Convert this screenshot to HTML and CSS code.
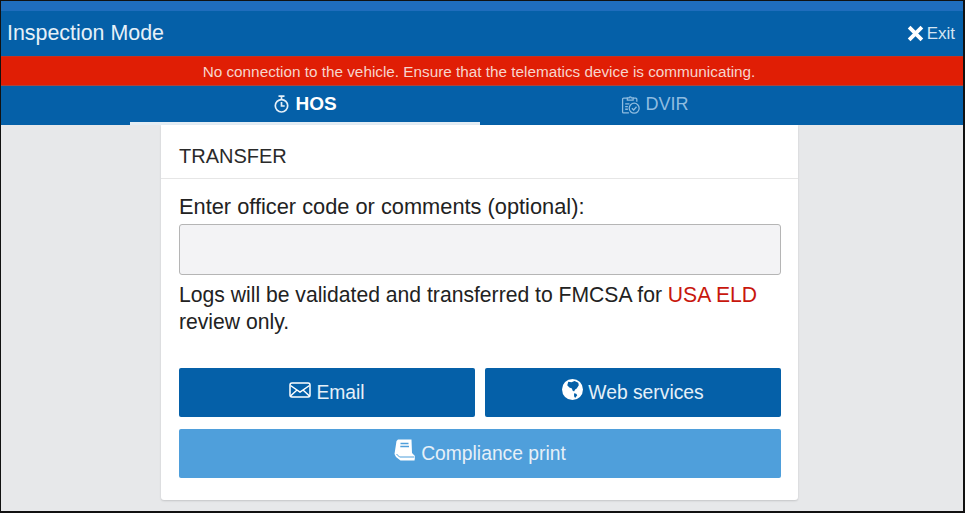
FILE: index.html
```html
<!DOCTYPE html>
<html lang="en">
<head>
    <meta charset="UTF-8">
    <meta name="viewport" content="width=device-width, initial-scale=1.0">
    <title>Inspection Mode</title>
    <link rel="stylesheet" href="styles.css">
</head>
<body>
    <div class="frame">
        <div class="status-strip"></div>
        <header class="topbar">
            <h1>Inspection Mode</h1>
            <a class="exit">
                <svg class="exit-icon" viewBox="0 0 16 16"><path d="M2 2 14 14M14 2 2 14" stroke="#fff" stroke-width="3.6" fill="none"/></svg>
                Exit
            </a>
        </header>
        <div class="alert">No connection to the vehicle. Ensure that the telematics device is communicating.</div>
        <nav class="tabs">
            <div class="tab active">
                <svg class="tab-icon" viewBox="0 0 16 18" fill="none" stroke="#e6f0f8" stroke-width="1.7">
                    <circle cx="8" cy="10.8" r="6.2"/>
                    <path d="M5 1.200h6M8 1.200v3.400M8 7v4h3.200"/>
                </svg>
                HOS
            </div>
            <div class="tab dvir">
                <svg class="tab-icon" viewBox="0 0 18 18" fill="none" stroke="#8fbce0" stroke-width="1.2">
                    <path d="M6 3H2.500a1 1 0 0 0-1 1v12a1 1 0 0 0 1 1h5M11.500 3H14a1 1 0 0 1 1 1v2.500"/>
                    <path d="M6 4.800V2.800h1.700a1 1 0 0 1 2.100 0h1.700v2z"/>
                    <path d="M4 8.500h4M4 11h2.500M4 13.500h2.500"/>
                    <circle cx="12.500" cy="12.500" r="4.700"/>
                    <path d="M10.300 12.500l1.700 1.700 2.700-3.100"/>
                </svg>
                DVIR
            </div>
        </nav>
        <main class="content">
            <section class="card">
                <h2>TRANSFER</h2>
                <div class="card-body">
                    <label for="comments">Enter officer code or comments (optional):</label>
                    <input type="text" id="comments" name="comments">
                    <p class="note">Logs will be validated and transferred to FMCSA for <span class="red">USA ELD</span> review only.</p>
                    <div class="actions">
                        <button class="btn">
                            <svg class="btn-icon" viewBox="0 0 22 16" fill="none" stroke="#fff" stroke-width="1.500">
                                <rect x="1" y="1" width="20" height="14" rx="2"/>
                                <path d="M1.500 3.500 11 10l9.500-6.500M1.500 14l6.500-6M20.500 14l-6.500-6"/>
                            </svg>
                            Email
                        </button>
                        <button class="btn">
                            <svg class="btn-icon globe" viewBox="0 0 20 20">
                                <circle cx="10" cy="10" r="10" fill="#fff"/>
                                <path d="M6 2.500 9 3l3-1 3.500 1.500.5 2.500-2 3-1.500 1-1 2-1.500-1-.5-2-2.500-1-2-2L6 2.500zM11.500 13.500l2 .5 1 1.500-2 2.500-1-1.500z" fill="#0560a8"/>
                            </svg>
                            Web services
                        </button>
                        <button class="btn btn-light wide">
                            <svg class="btn-icon book" viewBox="0 0 22 22">
                                <path d="M4 .5H17.500l.5 13.500 3 3v1.500L20.500 21.500H6.500L2 18 .5 15 2.500 2z" fill="#fff"/>
                                <path d="M6.500 4.500h8M6.300 7.500h8.700" stroke="#4f9fdb" stroke-width="1.500"/>
                                <path d="M2.500 15 5.500 18H20.500" stroke="#4f9fdb" stroke-width="1" fill="none"/>
                            </svg>
                            Compliance print
                        </button>
                    </div>
                </div>
            </section>
        </main>
    </div>
</body>
</html>
```

FILE: styles.css
```css
* {
    box-sizing: border-box;
}

body {
    margin: 0;
    font-family: "Liberation Sans", Arial, sans-serif;
    background-color: #000;
}

.frame {
    width: 965px;
    height: 513px;
    border-style: solid;
    border-color: #111;
    border-width: 1px 2px 2px 1px;
    display: flex;
    flex-direction: column;
    background-color: #e7e8ea;
    overflow: hidden;
}

.status-strip {
    height: 10px;
    background-color: #1f6dbd;
}

.topbar {
    height: 45px;
    padding: 0 8px 0 6px;
    display: flex;
    align-items: center;
    justify-content: space-between;
    background-color: #0560a8;
    color: #fff;
}

h1 {
    margin: 0;
    font-size: 21.4px;
    font-weight: normal;
    color: #e6f0f8;
}

.exit {
    display: flex;
    align-items: center;
    gap: 3px;
    font-size: 17px;
    color: #d5e5f2;
}

.exit-icon {
    width: 17px;
    height: 17px;
}

.alert {
    height: 30px;
    line-height: 29px;
    padding-right: 6px;
    text-align: center;
    font-size: 15.3px;
    color: #f7d5cd;
    background-color: #e01e05;
    border-top: 1px solid #c9301c;
    border-bottom: 1px solid #a8453f;
}

.tabs {
    height: 39px;
    padding-left: 129px;
    display: flex;
    background-color: #0560a8;
}

.tab {
    width: 350px;
    display: flex;
    align-items: center;
    justify-content: center;
    gap: 5px;
    padding-bottom: 2px;
    font-size: 18px;
    color: #8fbce0;
}

.tab.active {
    color: #fff;
    font-size: 19px;
    font-weight: bold;
    padding-bottom: 0;
    border-bottom: 3px solid #e4edf4;
}

.tab-icon {
    width: 17px;
    height: 18px;
}

.dvir .tab-icon {
    width: 19px;
    height: 19px;
}

.content {
    flex: 1;
    display: flex;
    justify-content: center;
    padding-right: 5px;
}

.card {
    width: 637px;
    height: 375px;
    background-color: #fff;
    border-radius: 0 0 3px 3px;
    box-shadow: 0 1px 2px rgba(0, 0, 0, 0.15);
}

h2 {
    margin: 0;
    height: 54px;
    padding: 21px 18px 0;
    font-size: 20px;
    font-weight: normal;
    line-height: 20px;
    color: #2a2a2a;
    border-bottom: 1px solid #e6e6e6;
}

.card-body {
    padding: 16px 17px 0 18px;
}

label {
    display: block;
    font-size: 21.8px;
    line-height: 24px;
    color: #222;
}

input {
    display: block;
    width: 100%;
    height: 51px;
    margin-top: 5px;
    background-color: #f3f3f5;
    border: 1px solid #b5b5b5;
    border-radius: 3px;
}

.note {
    margin: 6px 0 0;
    font-size: 21.15px;
    line-height: 27px;
    color: #222;
}

.red {
    color: #c8170d;
}

.actions {
    margin-top: 33px;
    display: grid;
    grid-template-columns: 1fr 1fr;
    gap: 12px 10px;
}

.btn {
    height: 49px;
    display: flex;
    align-items: center;
    justify-content: center;
    gap: 5px;
    border: none;
    border-radius: 2px;
    font-family: inherit;
    font-size: 19.3px;
    color: #e6f0f8;
    background-color: #0560a8;
}

.btn-light {
    background-color: #4f9fdb;
}

.wide {
    grid-column: span 2;
}

.btn-icon {
    width: 22px;
    height: 16px;
    margin-top: -5px;
}

.globe {
    width: 21px;
    height: 21px;
    margin-top: -6px;
}

.book {
    width: 22px;
    height: 22px;
    margin-top: -7px;
}
```
